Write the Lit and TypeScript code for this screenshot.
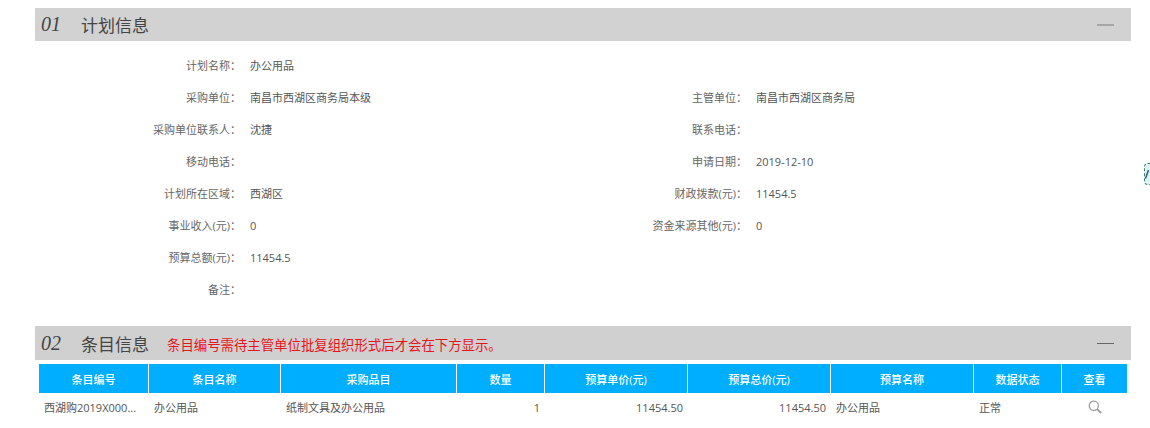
import { LitElement, html, css } from "lit";
import { customElement } from "lit/decorators.js";

const rows: [string, string, string?, string?][] = [
  ["计划名称：", "办公用品"],
  ["采购单位：", "南昌市西湖区商务局本级", "主管单位：", "南昌市西湖区商务局"],
  ["采购单位联系人：", "沈捷", "联系电话：", ""],
  ["移动电话：", "", "申请日期：", "2019-12-10"],
  ["计划所在区域：", "西湖区", "财政拨款(元)：", "11454.5"],
  ["事业收入(元)：", "0", "资金来源其他(元)：", "0"],
  ["预算总额(元)：", "11454.5"],
  ["备注：", ""],
];
const cols = [
  ["条目编号", 110, "西湖购2019X000...", "l"],
  ["条目名称", 132, "办公用品", "l"],
  ["采购品目", 176, "纸制文具及办公用品", "l"],
  ["数量", 88, "1", "r"],
  ["预算单价(元)", 143, "11454.50", "r"],
  ["预算总价(元)", 143, "11454.50", "r"],
  ["预算名称", 143, "办公用品", "l"],
  ["数据状态", 88, "正常", "l"],
  ["查看", 65, "", "c"],
] as const;

@customElement("app-root")
export class AppRoot extends LitElement {
  static styles = css`
    :host { display: block; width: 1150px; height: 428px; overflow: hidden; position: relative; background: #fff;
      font-family: "Open Sans", "Noto Sans CJK SC", sans-serif; font-size: 11px; color: #555; }
    .wrap { padding: 8px 19px 0 35px; }
    .bar { height: 33px; background: #d2d2d2; display: flex; align-items: center; padding-left: 6px; }
    .bar.second { height: 34px; background: #d0d0d0; }
    .num { font-family: "Liberation Serif", serif; font-style: italic; font-size: 20px; color: #444; width: 40px; }
    .title { font-size: 17px; color: #444; }
    .warn { font-size: 13.4px; color: #e8141c; margin-left: 18px; margin-top: 2px; }
    .dash { margin-left: auto; margin-right: 17px; width: 17px; height: 1px; background: #666; }
    .first .dash { height: 2px; background: #a6a6a6; }
    .form { padding-top: 8px; height: 277px; }
    .row { display: grid; grid-template-columns: 206px 301px 205px 1fr; height: 32px; align-items: center; }
    .k { text-align: right; color: #666; white-space: nowrap; }
    .v { padding-left: 9px; color: #555; white-space: nowrap; }
    .table { margin-left: 4px; margin-top: 4px; width: 1088px; }
    .head, .body { display: flex; }
    .head > div { height: 29px; background: #00aeff; color: #fff; display: flex; align-items: center; justify-content: center;
      border-right: 1px solid #fff; box-sizing: border-box; font-weight: 500; }
    .head > div:last-child { border-right: 0; }
    .body > div { height: 28px; display: flex; align-items: center; box-sizing: border-box; padding: 0 5px; white-space: nowrap; }
    .r { justify-content: flex-end; }
    .c { justify-content: center; }
    .side { position: absolute; left: 1144px; top: 163px; width: 12px; height: 22px; border: 1px dashed #3f7f6f; border-radius: 4px;
      box-sizing: border-box; background: #dff3f6; display: flex; align-items: center; }
  `;
  render() {
    return html`<div class="wrap">
      <div class="bar first"><span class="num">01</span><span class="title">计划信息</span><span class="dash"></span></div>
      <div class="form">
        ${rows.map((r) => html`<div class="row">
          <div class="k">${r[0]}</div><div class="v">${r[1]}</div>
          <div class="k">${r[2] ?? ""}</div><div class="v">${r[3] ?? ""}</div></div>`)}
      </div>
      <div class="bar second"><span class="num">02</span><span class="title">条目信息</span>
        <span class="warn">条目编号需待主管单位批复组织形式后才会在下方显示。</span><span class="dash"></span></div>
      <div class="table">
        <div class="head">${cols.map((c) => html`<div style="width:${c[1]}px">${c[0]}</div>`)}</div>
        <div class="body">${cols.map((c, i) => html`<div class="${c[3]}" style="width:${c[1]}px">
          ${i === 8 ? html`<svg width="14" height="14" viewBox="0 0 14 14" fill="none" stroke="#999" stroke-width="1.2"><circle cx="5.8" cy="5.8" r="4.6"/><path d="M9.2 9.2l4 4" stroke-width="1.8"/></svg>` : c[2]}</div>`)}</div>
      </div>
    </div><div class="side"><svg width="5" height="10" viewBox="0 0 5 10" fill="none" stroke="#2a5a8a" stroke-width="1.5"><path d="M0.5 9.5L3.5 1"/></svg></div>`;
  }
}
